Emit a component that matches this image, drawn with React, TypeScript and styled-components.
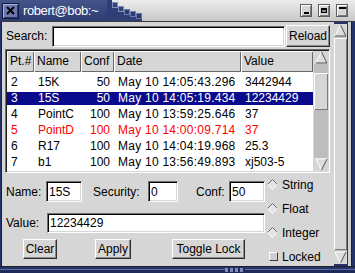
import styled, { createGlobalStyle } from 'styled-components'

const GRAY = '#d6d6d6'
const NAVY = '#26336a'

const GlobalStyle = createGlobalStyle`
  html, body {
    margin: 0;
    padding: 0;
    background: ${GRAY};
  }
  body {
    font-family: 'Liberation Sans', Arial, Helvetica, sans-serif;
    font-size: 12px;
    color: #000;
  }
`

interface Entry {
  pt: number
  name: string
  conf: number
  date: string
  value: string
  alarm?: boolean
}

const entries: Entry[] = [
  { pt: 2, name: '15K', conf: 50, date: 'May 10 14:05:43.296', value: '3442944' },
  { pt: 3, name: '15S', conf: 50, date: 'May 10 14:05:19.434', value: '12234429' },
  { pt: 4, name: 'PointC', conf: 100, date: 'May 10 13:59:25.646', value: '37' },
  { pt: 5, name: 'PointD', conf: 100, date: 'May 10 14:00:09.714', value: '37', alarm: true },
  { pt: 6, name: 'R17', conf: 100, date: 'May 10 14:04:19.968', value: '25.3' },
  { pt: 7, name: 'b1', conf: 100, date: 'May 10 13:56:49.893', value: 'xj503-5' },
]

const columns = [
  { title: 'Pt.#', width: 27 },
  { title: 'Name', width: 47 },
  { title: 'Conf', width: 33, right: true },
  { title: 'Date', width: 127 },
  { title: 'Value', width: 72 },
]

const SELECTED = 3

function UpArrow() {
  return (
    <svg width='13' height='13' viewBox='0 0 13 13'>
      <polygon points='6.5,1.5 11.5,11.5 1.5,11.5' fill='#dcdcdc' />
      <line x1='6.5' y1='1' x2='1' y2='12' stroke='#fff' />
      <line x1='6.5' y1='1' x2='12' y2='12' stroke='#555' />
      <line x1='1' y1='12' x2='12' y2='12' stroke='#555' />
    </svg>
  )
}

function DownArrow() {
  return (
    <svg width='13' height='13' viewBox='0 0 13 13'>
      <polygon points='1.5,1.5 11.5,1.5 6.5,11.5' fill='#dcdcdc' />
      <line x1='1' y1='1' x2='12' y2='1' stroke='#fff' />
      <line x1='1' y1='1' x2='6.5' y2='12' stroke='#fff' />
      <line x1='12' y1='1' x2='6.5' y2='12' stroke='#555' />
    </svg>
  )
}

function Diamond() {
  return (
    <svg width='11' height='11' viewBox='0 0 11 11'>
      <polygon points='5.5,0.5 10.5,5.5 5.5,10.5 0.5,5.5' fill='#e4e4e4' />
      <polyline points='0.5,5.5 5.5,0.5 10.5,5.5' fill='none' stroke='#6a6a6a' />
      <polyline points='0.5,5.5 5.5,10.5 10.5,5.5' fill='none' stroke='#fff' />
    </svg>
  )
}

export default function App() {
  return (
    <>
      <GlobalStyle />
      <Window>
        <TitleBar>
          <TitleBlue>
            <CloseButton>
              <svg width='9' height='9' viewBox='0 0 9 9'>
                <path d='M1 1 L8 8 M8 1 L1 8' stroke='#000' strokeWidth='2' />
              </svg>
            </CloseButton>
            <TitleText>robert@bob:~</TitleText>
          </TitleBlue>
          <TitleSteps width='38' height='21' viewBox='0 0 38 21'>
            <polygon
              points='0,0 5,0 5,3 11,3 11,7 17,7 17,10 23,10 23,12 29,12 29,14 35,14 35,21 0,21'
              fill='#2f3e74'
            />
            <rect x='5.5' y='2.5' width='5' height='5' fill='#33437a' stroke='#7d8dc0' />
            <rect x='11.5' y='6.5' width='5' height='5' fill='#33437a' stroke='#7d8dc0' />
            <rect x='17.5' y='9.5' width='5' height='5' fill='#2c3a70' stroke='#6e7eb4' />
            <rect x='23.5' y='11.5' width='5' height='5' fill='#2c3a70' stroke='#6e7eb4' />
            <rect x='29.5' y='13.5' width='5' height='5' fill='#2a386c' stroke='#6474aa' />
          </TitleSteps>
          <TitleGray>
            <WinButton>
              <MinGlyph />
            </WinButton>
            <WinButton>
              <MaxGlyph />
            </WinButton>
            <WinButton>
              <ShadeGlyph />
            </WinButton>
          </TitleGray>
        </TitleBar>

        <Main>
          <LeftEdge />
          <Content>
            <SearchRow>
              <Label $w={41} $ml={1}>
                Search:
              </Label>
              <SearchInput readOnly defaultValue='' />
              <PushButton $w={44} $h={22}>
                Reload
              </PushButton>
            </SearchRow>

            <TableFrame>
              <ListArea>
                <HeaderRow>
                  {columns.map((c) => (
                    <HeaderCell key={c.title} $w={c.width}>
                      {c.title}
                    </HeaderCell>
                  ))}
                </HeaderRow>
                <Rows>
                  {entries.map((e) => (
                    <Row
                      key={e.pt}
                      $selected={e.pt === SELECTED}
                      $alarm={e.alarm}
                    >
                      <Cell $w={columns[0].width}>{e.pt}</Cell>
                      <Cell $w={columns[1].width}>{e.name}</Cell>
                      <Cell $w={columns[2].width} $right>
                        {e.conf}
                      </Cell>
                      <Cell $w={columns[3].width} $wide>
                        {e.date}
                      </Cell>
                      <Cell $w={columns[4].width}>{e.value}</Cell>
                    </Row>
                  ))}
                </Rows>
              </ListArea>
              <InnerScroll>
                <ArrowBox>
                  <UpArrow />
                </ArrowBox>
                <Thumb />
                <Trough />
                <ArrowBox>
                  <DownArrow />
                </ArrowBox>
              </InnerScroll>
            </TableFrame>

            <Form>
              <FormLeft>
                <FieldRow $top={8} $h={21}>
                  <Label $w={40} $ml={1}>
                    Name:
                  </Label>
                  <Field $w={36} readOnly defaultValue='15S' />
                  <Label $w={55} $ml={11}>
                    Security:
                  </Label>
                  <Field $w={30} readOnly defaultValue='0' />
                  <Label $w={33} $ml={18}>
                    Conf:
                  </Label>
                  <Field $w={36} readOnly defaultValue='50' />
                </FieldRow>
                <FieldRow $top={11} $h={20}>
                  <Label $w={41} $ml={1}>
                    Value:
                  </Label>
                  <Field $grow readOnly defaultValue='12234429' />
                </FieldRow>
                <FieldRow $top={6} $h={20}>
                  <PushButton $w={34} $h={20} $ml={18}>
                    Clear
                  </PushButton>
                  <PushButton $w={36} $h={20} $ml={38}>
                    Apply
                  </PushButton>
                  <PushButton $w={73} $h={20} $ml={41}>
                    Toggle Lock
                  </PushButton>
                </FieldRow>
              </FormLeft>
              <Options>
                <Option>
                  <Diamond />
                  <span>String</span>
                </Option>
                <Option>
                  <Diamond />
                  <span>Float</span>
                </Option>
                <Option>
                  <Diamond />
                  <span>Integer</span>
                </Option>
                <Option>
                  <CheckBox />
                  <span>Locked</span>
                </Option>
              </Options>
            </Form>
          </Content>
          <OuterScroll>
            <ArrowBox>
              <UpArrow />
            </ArrowBox>
            <OuterThumb />
            <ArrowBox>
              <DownArrow />
            </ArrowBox>
          </OuterScroll>
          <RightEdge />
        </Main>
        <BottomEdge>
          <Grip />
        </BottomEdge>
      </Window>
    </>
  )
}

const raised = `
  background: ${GRAY};
  box-shadow: inset 1px 1px 0 #fff, inset -1px -1px 0 #7a7a7a;
`

const Window = styled.div`
  width: 355px;
  height: 273px;
  display: flex;
  flex-direction: column;
  background: ${NAVY};
  overflow: hidden;
`

const TitleBar = styled.div`
  height: 21px;
  flex: none;
  display: flex;
`

const TitleBlue = styled.div`
  width: 107px;
  display: flex;
  align-items: center;
  background: linear-gradient(#44558c, #2c3b72);
`

const CloseButton = styled.div`
  width: 17px;
  height: 16px;
  margin: 0 4px 0 2px;
  box-sizing: border-box;
  display: flex;
  align-items: center;
  justify-content: center;
  border: 1px solid #141c40;
  background: #6a7aae;
  box-shadow: inset 1px 1px 0 #a4b0d8, inset -1px -1px 0 #2a3462;
`

const TitleText = styled.span`
  color: #fff;
  font-size: 13px;
  letter-spacing: -0.4px;
  white-space: nowrap;
`

const TitleSteps = styled.svg`
  flex: none;
  display: block;
  background: linear-gradient(#ececec, #c8c8c8);
`

const TitleGray = styled.div`
  flex: 1;
  display: flex;
  justify-content: flex-end;
  align-items: flex-start;
  gap: 6px;
  padding: 4px 7px 0 0;
  background: linear-gradient(#ececec, #c8c8c8);
`

const WinButton = styled.div`
  width: 12px;
  height: 13px;
  box-sizing: border-box;
  border: 1px solid #5c5c5c;
  display: flex;
  justify-content: center;
  ${raised}
`

const MinGlyph = styled.div`
  width: 5px;
  height: 2px;
  margin-top: 7px;
  background: #000;
`

const MaxGlyph = styled.div`
  width: 6px;
  height: 5px;
  margin-top: 3px;
  box-sizing: border-box;
  border: 1px solid #000;
  border-top-width: 2px;
  background: #8a8a8a;
`

const ShadeGlyph = styled.div`
  width: 7px;
  height: 2px;
  margin-top: 2px;
  background: #000;
`

const Main = styled.div`
  flex: 1;
  min-height: 0;
  display: flex;
  border-top: 1px solid #3c3c3c;
  border-bottom: 1px solid #222;
`

const LeftEdge = styled.div`
  width: 2px;
  flex: none;
  background: linear-gradient(to right, ${NAVY} 0 1px, #1a1f3a 1px);
`

const Content = styled.div`
  width: 332px;
  flex: none;
  box-sizing: border-box;
  padding: 3px 4px 0 3px;
  display: flex;
  flex-direction: column;
  background: ${GRAY};
`

const SearchRow = styled.div`
  height: 22px;
  flex: none;
  display: flex;
  align-items: center;
`

const Label = styled.span<{ $w: number; $ml?: number }>`
  width: ${(p) => p.$w}px;
  margin-left: ${(p) => p.$ml ?? 0}px;
  flex: none;
  white-space: nowrap;
`

const sunken = `
  box-sizing: border-box;
  border: 1px solid;
  border-color: #6e6e6e #fff #fff #6e6e6e;
  box-shadow: inset 1px 1px 0 #000, inset -1px -1px 0 ${GRAY};
  background: #fff;
  font-family: 'Liberation Sans', Arial, Helvetica, sans-serif;
  font-size: 12px;
  color: #000;
  outline: none;
  margin: 0;
`

const SearchInput = styled.input`
  ${sunken}
  flex: 1;
  min-width: 0;
  height: 21px;
  margin: 1px 1px 0 5px;
`

const Field = styled.input<{ $w?: number; $grow?: boolean }>`
  ${sunken}
  width: ${(p) => (p.$w ? `${p.$w}px` : 'auto')};
  flex: ${(p) => (p.$grow ? '1' : 'none')};
  min-width: 0;
  height: 100%;
  padding: 0 0 0 2px;
`

const PushButton = styled.button<{ $w: number; $h: number; $ml?: number }>`
  width: ${(p) => p.$w}px;
  height: ${(p) => p.$h}px;
  margin: 0 0 0 ${(p) => p.$ml ?? 0}px;
  padding: 0;
  flex: none;
  box-sizing: border-box;
  border: 1px solid;
  border-color: #fff #2e2e2e #2e2e2e #fff;
  box-shadow: inset -1px -1px 0 #8a8a8a;
  background: ${GRAY};
  font-family: 'Liberation Sans', Arial, Helvetica, sans-serif;
  font-size: 12px;
  color: #000;
  white-space: nowrap;
`

const TableFrame = styled.div`
  margin-top: 2px;
  height: 124px;
  flex: none;
  box-sizing: border-box;
  display: flex;
  gap: 1px;
  border: 1px solid;
  border-color: #6e6e6e #fff #fff #6e6e6e;
  box-shadow: inset 1px 1px 0 #1e1e1e, inset -1px -1px 0 ${GRAY};
  padding: 1px;
  background: ${GRAY};
`

const ListArea = styled.div`
  width: 306px;
  flex: none;
  display: flex;
  flex-direction: column;
`

const HeaderRow = styled.div`
  height: 21px;
  flex: none;
  display: flex;
`

const HeaderCell = styled.div<{ $w: number }>`
  width: ${(p) => p.$w}px;
  flex: none;
  box-sizing: border-box;
  padding-left: 3px;
  line-height: 21px;
  white-space: nowrap;
  overflow: hidden;
  background: ${GRAY};
  box-shadow: inset 1px 1px 0 #fff, inset -1px -1px 0 #6a6a6a;
`

const Rows = styled.div`
  flex: 1;
  padding-top: 1px;
  background: #fff;
`

const Row = styled.div<{ $selected?: boolean; $alarm?: boolean }>`
  height: 13px;
  margin-top: 3px;
  display: flex;
  background: ${(p) => (p.$selected ? '#0a0a8c' : 'transparent')};
  color: ${(p) => (p.$selected ? '#fff' : p.$alarm ? '#ff0000' : '#000')};
`

const Cell = styled.div<{ $w: number; $right?: boolean; $wide?: boolean }>`
  width: ${(p) => p.$w}px;
  flex: none;
  box-sizing: border-box;
  padding: 0 4px;
  line-height: 13px;
  white-space: nowrap;
  overflow: hidden;
  letter-spacing: ${(p) => (p.$wide ? '0.25px' : '0')};
  text-align: ${(p) => (p.$right ? 'right' : 'left')};
`

const InnerScroll = styled.div`
  width: 14px;
  flex: none;
  display: flex;
  flex-direction: column;
  background: #bdbdbd;
`

const ArrowBox = styled.div`
  height: 13px;
  flex: none;
  display: flex;
  justify-content: center;
  background: ${GRAY};
`

const Thumb = styled.div`
  height: 37px;
  margin-top: 9px;
  flex: none;
  ${raised}
`

const Trough = styled.div`
  flex: 1;
`

const Form = styled.div`
  flex: 1;
  display: flex;
  gap: 2px;
`

const FormLeft = styled.div`
  width: 260px;
  flex: none;
  display: flex;
  flex-direction: column;
`

const FieldRow = styled.div<{ $top: number; $h: number }>`
  margin-top: ${(p) => p.$top}px;
  height: ${(p) => p.$h}px;
  flex: none;
  display: flex;
  align-items: center;
`

const Options = styled.div`
  flex: 1;
  display: flex;
  flex-direction: column;
  gap: 9px;
  padding-top: 4px;
`

const Option = styled.div`
  height: 15px;
  display: flex;
  align-items: center;
  gap: 4px;

  svg {
    flex: none;
  }
`

const CheckBox = styled.div`
  width: 9px;
  height: 9px;
  margin-left: 2px;
  flex: none;
  box-sizing: border-box;
  border: 1px solid;
  border-color: #fff #3a3a3a #3a3a3a #fff;
  background: #d0d0d0;
`

const OuterScroll = styled.div`
  width: 13px;
  flex: none;
  margin: 2px 0;
  display: flex;
  flex-direction: column;
  gap: 1px;
  background: #bdbdbd;
`

const OuterThumb = styled.div`
  flex: 1;
  ${raised}
`

const RightEdge = styled.div`
  width: 8px;
  flex: none;
  background: linear-gradient(
    to right,
    #3a3a3a 0 1px,
    #d0d0d0 1px 4px,
    #1f1f1f 4px 5px,
    ${NAVY} 5px
  );
`

const BottomEdge = styled.div`
  height: 6px;
  flex: none;
  display: flex;
  background: linear-gradient(
    ${NAVY} 0 2px,
    #5d6da2 2px 3px,
    #1e2a5a 3px
  );
`

const Grip = styled.div`
  width: 20px;
  height: 4px;
  margin: 1px 0 0 225px;
  background: repeating-linear-gradient(
    to right,
    #7b8bbd 0 3px,
    #1e2a5a 3px 5px
  );
`
